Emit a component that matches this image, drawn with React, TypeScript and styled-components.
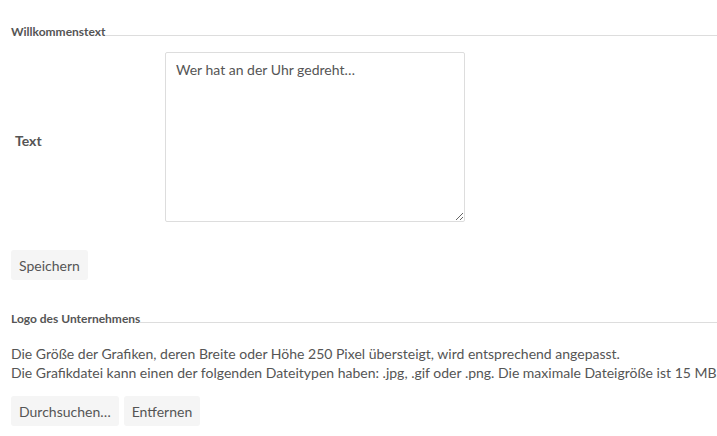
import React from "react";
import styled, { createGlobalStyle } from "styled-components";

const Global = createGlobalStyle`
  html, body { margin: 0; padding: 0; background: #fff; }
  body { font-family: Lato, "Noto Sans", sans-serif; color: #555; overflow: hidden; }
  * { box-sizing: border-box; }
`;

const Page = styled.div`
  padding: 24px 0 0 11px;
  width: 717px;
`;

const Section = styled.section`
  display: flex;
  flex-direction: column;
`;

const Legend = styled.div<{ $top?: number }>`
  display: flex;
  align-items: flex-end;
  margin-top: ${(p) => p.$top ?? 0}px;
  font-size: 12px;
  font-weight: 700;
  line-height: 16px;
  color: #555;
`;

const LegendLine = styled.span`
  flex: 1;
  border-bottom: 1px solid #ddd;
  margin-bottom: 4px;
`;

const FieldRow = styled.div`
  display: flex;
  align-items: center;
  margin-top: 12px;
`;

const Label = styled.label`
  width: 154px;
  padding-left: 4px;
  padding-top: 6px;
  font-size: 14px;
  font-weight: 700;
  color: #555;
`;

const TextArea = styled.textarea`
  width: 300px;
  height: 170px;
  border: 1px solid #ddd;
  border-radius: 2px;
  padding: 7px 10px;
  font-family: Lato, "Noto Sans", sans-serif;
  font-size: 14px;
  line-height: 20px;
  color: #555;
  resize: vertical;
  outline: none;
  margin: 0;
`;

const Actions = styled.div<{ $top: number }>`
  display: flex;
  gap: 5px;
  margin-top: ${(p) => p.$top}px;
`;

const Button = styled.button`
  height: 30px;
  padding: 0 8px;
  border: none;
  border-radius: 3px;
  background: #f5f5f5;
  font-family: Lato, "Noto Sans", sans-serif;
  font-size: 14px;
  color: #555;
  cursor: pointer;
`;

const Info = styled.p`
  margin: 17px 0 0;
  font-size: 14px;
  line-height: 19px;
  white-space: nowrap;
  color: #555;
`;

export default function App() {
  return (
    <Page>
      <Global />
      <Section>
        <Legend>
          Willkommenstext
          <LegendLine />
        </Legend>
        <FieldRow>
          <Label htmlFor="welcome">Text</Label>
          <TextArea id="welcome" defaultValue="Wer hat an der Uhr gedreht…" />
        </FieldRow>
        <Actions $top={28}>
          <Button>Speichern</Button>
        </Actions>
      </Section>
      <Section>
        <Legend $top={31}>
          Logo des Unternehmens
          <LegendLine />
        </Legend>
        <Info>
          Die Größe der Grafiken, deren Breite oder Höhe 250 Pixel übersteigt, wird entsprechend angepasst.
          <br />
          Die Grafikdatei kann einen der folgenden Dateitypen haben: .jpg, .gif oder .png. Die maximale Dateigröße ist 15 MB.
        </Info>
        <Actions $top={14}>
          <Button>Durchsuchen…</Button>
          <Button>Entfernen</Button>
        </Actions>
      </Section>
    </Page>
  );
}
